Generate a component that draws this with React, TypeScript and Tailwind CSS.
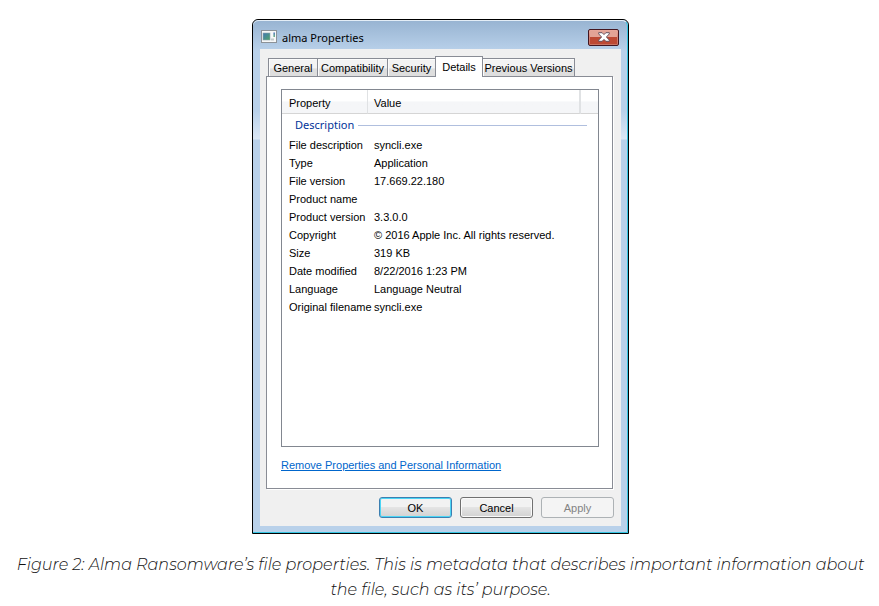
const properties = [
  ["File description", "syncli.exe"],
  ["Type", "Application"],
  ["File version", "17.669.22.180"],
  ["Product name", ""],
  ["Product version", "3.3.0.0"],
  ["Copyright", "© 2016 Apple Inc. All rights reserved."],
  ["Size", "319 KB"],
  ["Date modified", "8/22/2016 1:23 PM"],
  ["Language", "Language Neutral"],
  ["Original filename", "syncli.exe"],
];

const tabs = [
  { label: "General", width: "w-[49px]" },
  { label: "Compatibility", width: "w-[70px]" },
  { label: "Security", width: "w-12" },
  { label: "Details", width: "w-12" },
  { label: "Previous Versions", width: "w-[92px]" },
];

function AppIcon() {
  return (
    <svg className="mt-[2px]" width="16" height="13" viewBox="0 0 16 13" aria-hidden="true">
      <defs>
        <linearGradient id="screen" x1="0" y1="0" x2="1" y2="1">
          <stop offset="0" stopColor="#4478b4" />
          <stop offset="1" stopColor="#4fa668" />
        </linearGradient>
        <linearGradient id="bar" x1="0" y1="0" x2="0" y2="1">
          <stop offset="0" stopColor="#2b59b8" />
          <stop offset="1" stopColor="#4fa668" />
        </linearGradient>
      </defs>
      <rect x="0.5" y="0.5" width="15" height="12" fill="#f7f8f8" stroke="#8c9298" />
      <rect x="2" y="3" width="7" height="7" fill="url(#screen)" stroke="#8fa5ad" strokeWidth="0.6" />
      <rect x="12.5" y="2.5" width="1.3" height="4.5" fill="url(#bar)" />
      <rect x="10" y="8.5" width="3" height="2" fill="#c4cacc" />
    </svg>
  );
}

function CloseIcon() {
  return (
    <svg width="12" height="10" viewBox="0 0 12 10" aria-hidden="true">
      <path
        d="M.7.7h3.4L6 2.6 7.9.7h3.4v1.2L8.4 5l2.9 3.1v1.2H7.9L6 7.4 4.1 9.3H.7V8.1L3.6 5 .7 1.9z"
        fill="#fff"
        stroke="#5b4a58"
        strokeWidth="0.9"
      />
    </svg>
  );
}

export default function App() {
  return (
    <main className="flex min-h-screen flex-col items-center bg-white pt-[19px] pr-3 pl-[14px] text-black">
      <section
        aria-label="alma Properties"
        className="w-full max-w-[377px] rounded-t-md border border-black bg-[#b9d1ea] font-['Liberation_Sans',Arial,sans-serif] text-[11px] leading-[18px]"
      >
        <div className="rounded-t-md border-r border-b border-[#35c5e2] border-t border-t-[#e3edf6] bg-[linear-gradient(#98b4d2,#b9d1ea_30px,#b9d1ea_90px,#dbe7f5_118px,#b9d1ea_119px)] pr-[6px] pb-[6px] pl-[7px]">
          <header className="flex h-7 items-center gap-[5px] pl-px">
            <AppIcon />
            <h1 className="grow pt-[5px] font-['Noto_Sans',sans-serif] text-[11px]">alma Properties</h1>
            <button
              type="button"
              aria-label="Close"
              className="mt-1 mr-[2px] flex h-[17px] w-[31px] items-center justify-center rounded-xs border border-[#431620] bg-linear-to-b from-[#e9a99d] from-0% via-[#d28072] via-50% to-[#c87463]"
            >
              <span className="flex h-[13px] w-[27px] items-center justify-center bg-linear-to-b from-[#e3a396] from-45% to-[#bd4934] to-50%">
                <CloseIcon />
              </span>
            </button>
          </header>

          <div className="bg-[#f0f0f0] px-[6px] pt-[7px] pb-2">
            <div role="tablist" className="flex h-5 items-end pl-[2px]">
              {tabs.map(({ label, width }) => (
                <button
                  key={label}
                  type="button"
                  role="tab"
                  aria-selected={label === "Details"}
                  className={`${width} shrink-0 whitespace-nowrap border-[#898c95] ${
                    label === "Details"
                      ? "z-10 h-[21px] -mb-px border-x border-t bg-white pb-px"
                      : `h-[18px] border-t bg-linear-to-b from-[#f3f3f3] from-50% to-[#dedede] to-60% shadow-[inset_1px_1px_0_#fcfcfc] ${
                          label === "Previous Versions" ? "border-r" : "border-l"
                        }`
                  }`}
                >
                  {label}
                </button>
              ))}
            </div>

            <div role="tabpanel" className="mr-[2px] border border-[#898c95] bg-white pt-3 pr-[13px] pb-[14px] pl-[14px] shadow-[1px_1px_0_#fff]">
              <div className="h-[358px] border border-[#828790]">
                <table className="w-full table-fixed border-separate border-spacing-0 text-left">
                  <colgroup>
                    <col className="w-[86px]" />
                    <col />
                    <col className="w-[17px]" />
                  </colgroup>
                  <thead>
                    <tr className="h-6 bg-linear-to-b from-white from-45% to-[#f5f6f8] to-50%">
                      <th className="border-r border-b border-[#e0e2e4] border-b-[#d5d5d5] p-0 pt-[2px] pl-[7px] font-normal">Property</th>
                      <th className="border-r-2 border-b border-[#e0e2e4] border-b-[#d5d5d5] p-0 pt-[2px] pl-[6px] font-normal">Value</th>
                      <th className="border-b border-b-[#d5d5d5] p-0" />
                    </tr>
                  </thead>
                  <tbody>
                    <tr>
                      <th colSpan={3} className="h-[22px] p-0 pr-[11px] pl-[13px] font-normal">
                        <div className="flex items-center gap-1">
                          <span className="font-['Noto_Sans',sans-serif] text-[11px] text-[#003399]">Description</span>
                          <span className="h-px grow bg-[#b0bfde]" />
                        </div>
                      </th>
                    </tr>
                    {properties.map(([name, value]) => (
                      <tr key={name} className="h-[18px]">
                        <th className="whitespace-nowrap p-0 pl-[7px] font-normal">{name}</th>
                        <td className="whitespace-nowrap p-0 pl-[6px]">{value}</td>
                        <td className="p-0" />
                      </tr>
                    ))}
                  </tbody>
                </table>
              </div>
              <a href="#remove" className="mt-[9px] block w-fit text-[#0066cc] underline">
                Remove Properties and Personal Information
              </a>
            </div>

            <footer className="mt-2 flex justify-end gap-2 pr-px">
              <button
                type="button"
                className="h-[21px] w-[73px] rounded-[3px] border border-[#3c7fb1] bg-linear-to-b from-[#f2f2f2] from-45% via-[#e4e4e4] via-50% to-[#d2d2d2] shadow-[inset_0_0_0_1px_#4bd5f5]"
              >
                OK
              </button>
              <button
                type="button"
                className="h-[21px] w-[73px] rounded-[3px] border border-[#707070] bg-linear-to-b from-[#f2f2f2] from-45% via-[#e4e4e4] via-50% to-[#d2d2d2] shadow-[inset_0_0_0_1px_#fafafa]"
              >
                Cancel
              </button>
              <button
                type="button"
                disabled
                className="h-[21px] w-[73px] rounded-[3px] border border-[#adb2b5] bg-[#f4f4f4] text-[#838383]"
              >
                Apply
              </button>
            </footer>
          </div>
        </div>
      </section>
      <p className="mt-[18px] text-center font-['Montserrat',Inter,sans-serif] text-base leading-[25px] font-light text-[#111] italic">
        Figure 2: Alma Ransomware’s file properties. This is metadata that describes important information about the file, such
        as its’ purpose.
      </p>
    </main>
  );
}
